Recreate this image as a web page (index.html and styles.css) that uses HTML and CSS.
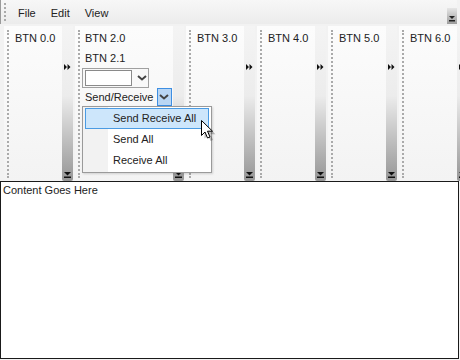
FILE: index.html
```html
<!DOCTYPE html>
<html lang="en">
<head>
  <meta charset="UTF-8">
  <title>Toolbars</title>
  <link rel="stylesheet" href="styles.css">
</head>
<body>

<div class="menubar">
  <span class="handle"></span>
  <span class="menu-item">File</span>
  <span class="menu-item">Edit</span>
  <span class="menu-item">View</span>
  <span class="menu-chev">
    <svg width="10" height="8" viewBox="0 0 10 8"><path d="M2 1h6L5 4z" fill="#222"/><rect x="2" y="5" width="6" height="1.5" fill="#222"/></svg>
  </span>
</div>

<div class="toolbars">
  <div class="toolbar">
    <span class="handle"></span>
    <div class="tb-body narrow">
      <div class="btn">BTN 0.0</div>
    </div>
    <div class="strip">
      <svg class="more" width="7" height="6" viewBox="0 0 7 6"><path d="M0 0l3 3-3 3zM3.5 0l3 3-3 3z" fill="#111"/></svg>
      <svg width="9" height="8" viewBox="0 0 9 8"><path d="M1 1h7L4.5 4.5z" fill="#111"/><rect x="1" y="5.5" width="7" height="1.5" fill="#111"/></svg>
    </div>
  </div>

  <div class="toolbar">
    <span class="handle"></span>
    <div class="tb-body wide">
      <div class="btn">BTN 2.0</div>
      <div class="btn">BTN 2.1</div>
      <div class="combo">
        <span class="combo-field"></span>
        <svg width="10" height="6" viewBox="0 0 10 6"><path d="M1 1l4 3.5L9 1" fill="none" stroke="#444" stroke-width="2"/></svg>
      </div>
      <div class="split">
        <span>Send/Receive</span>
        <span class="split-btn">
          <svg width="10" height="6" viewBox="0 0 10 6"><path d="M1 1l4 3.5L9 1" fill="none" stroke="#444" stroke-width="2"/></svg>
        </span>
      </div>
    </div>
    <div class="strip">
      <span class="more-gap"></span>
      <svg width="9" height="8" viewBox="0 0 9 8"><path d="M1 1h7L4.5 4.5z" fill="#111"/><rect x="1" y="5.5" width="7" height="1.5" fill="#111"/></svg>
    </div>
  </div>

  <div class="toolbar">
    <span class="handle"></span>
    <div class="tb-body narrow">
      <div class="btn">BTN 3.0</div>
    </div>
    <div class="strip">
      <svg class="more" width="7" height="6" viewBox="0 0 7 6"><path d="M0 0l3 3-3 3zM3.5 0l3 3-3 3z" fill="#111"/></svg>
      <svg width="9" height="8" viewBox="0 0 9 8"><path d="M1 1h7L4.5 4.5z" fill="#111"/><rect x="1" y="5.5" width="7" height="1.5" fill="#111"/></svg>
    </div>
  </div>

  <div class="toolbar">
    <span class="handle"></span>
    <div class="tb-body narrow">
      <div class="btn">BTN 4.0</div>
    </div>
    <div class="strip">
      <svg class="more" width="7" height="6" viewBox="0 0 7 6"><path d="M0 0l3 3-3 3zM3.5 0l3 3-3 3z" fill="#111"/></svg>
      <svg width="9" height="8" viewBox="0 0 9 8"><path d="M1 1h7L4.5 4.5z" fill="#111"/><rect x="1" y="5.5" width="7" height="1.5" fill="#111"/></svg>
    </div>
  </div>

  <div class="toolbar">
    <span class="handle"></span>
    <div class="tb-body narrow">
      <div class="btn">BTN 5.0</div>
    </div>
    <div class="strip">
      <svg class="more" width="7" height="6" viewBox="0 0 7 6"><path d="M0 0l3 3-3 3zM3.5 0l3 3-3 3z" fill="#111"/></svg>
      <svg width="9" height="8" viewBox="0 0 9 8"><path d="M1 1h7L4.5 4.5z" fill="#111"/><rect x="1" y="5.5" width="7" height="1.5" fill="#111"/></svg>
    </div>
  </div>

  <div class="toolbar">
    <span class="handle"></span>
    <div class="tb-body narrow">
      <div class="btn">BTN 6.0</div>
    </div>
    <div class="strip">
      <svg class="more" width="7" height="6" viewBox="0 0 7 6"><path d="M0 0l3 3-3 3zM3.5 0l3 3-3 3z" fill="#111"/></svg>
      <svg width="9" height="8" viewBox="0 0 9 8"><path d="M1 1h7L4.5 4.5z" fill="#111"/><rect x="1" y="5.5" width="7" height="1.5" fill="#111"/></svg>
    </div>
  </div>
</div>

<div class="content">Content Goes Here</div>

<div class="popup">
  <div class="popup-item active">Send Receive All</div>
  <div class="popup-item">Send All</div>
  <div class="popup-item">Receive All</div>
</div>

<svg class="cursor" width="16" height="22" viewBox="0 0 16 22">
  <path d="M2.5 2.5v15l3.5-3.5 2.5 6 2.5-1-2.5-5.8h5z" fill="#000" opacity="0.25" transform="translate(2 2)"/>
  <path d="M1.5 1.5v15l3.5-3.5 2.5 6 2.5-1-2.5-5.8h5z" fill="#fff" stroke="#000" stroke-width="1" stroke-linejoin="round"/>
</svg>

</body>
</html>
```

FILE: styles.css
```css
body {
  margin: 0;
  font-family: "Liberation Sans", Arial, sans-serif;
  font-size: 11px;
  color: #222;
  background: #f2f2f2;
  position: relative;
  width: 460px;
  height: 360px;
  overflow: hidden;
}

.handle {
  width: 0;
  border-left: 2px dotted #aaa;
}

/* menu bar */
.menubar {
  display: flex;
  align-items: center;
  height: 24px;
  border-left: 1px solid #9a9a9a;
  margin-right: 3px;
  background: linear-gradient(#f7f7f7, #ececec);
}
.menubar .handle {
  align-self: stretch;
  margin: 3px 0 3px 3px;
}
.menu-item {
  margin-left: 12px;
  margin-right: 3px;
  padding-top: 1px;
}
.menu-chev {
  margin-left: auto;
  width: 10px;
  height: 16px;
  margin-top: 7px;
  display: flex;
  align-items: flex-end;
  justify-content: center;
  padding-bottom: 1px;
  box-sizing: border-box;
  background: linear-gradient(#e6e6e6, #9c9c9c);
}

/* toolbars */
.toolbars {
  display: flex;
  gap: 2px;
  height: 155px;
  margin-top: 2px;
  padding-left: 4px;
}
.toolbar {
  display: flex;
  flex-shrink: 0;
  background: linear-gradient(#fcfcfc, #f3f3f3);
}
.toolbar .handle {
  margin: 4px 6px 3px 3px;
}
.tb-body {
  padding-top: 5px;
}
.tb-body.narrow {
  width: 47px;
}
.tb-body.wide {
  width: 88px;
  margin-left: -1px;
}
.btn {
  height: 20px;
  line-height: 14px;
}
.combo {
  display: flex;
  align-items: center;
  gap: 5px;
  width: 67px;
  height: 20px;
  border: 1px solid #a0a0a0;
  margin-left: -3px;
  margin-top: -3px;
  padding-left: 2px;
  box-sizing: border-box;
  background: #f8f8f8;
}
.combo-field {
  width: 45px;
  height: 14px;
  background: #fff;
  border: 1px solid #8a8a8a;
}
.split {
  display: flex;
  align-items: center;
  height: 18px;
  margin-top: 0;
}
.split-btn {
  width: 13px;
  height: 16px;
  margin-left: 3px;
  display: flex;
  align-items: center;
  justify-content: center;
  background: #b9d6f4;
  border: 1px solid #3d8ee2;
}

.strip {
  width: 11px;
  display: flex;
  flex-direction: column;
  align-items: center;
  padding-bottom: 2px;
  box-sizing: border-box;
  background: linear-gradient(#f4f4f4 0%, #ececec 45%, #969696 100%);
  border-radius: 0 0 2px 2px;
}
.strip .more {
  margin-top: 38px;
}
.strip .more-gap {
  height: 44px;
}
.strip svg:last-child {
  margin-top: auto;
}

/* content */
.content {
  margin: 0 1px 0 0;
  border: 1px solid #1a1a1a;
  padding: 2px;
  box-sizing: border-box;
  height: 178px;
  line-height: 12px;
  background: #fff;
}

/* dropdown popup */
.popup {
  position: absolute;
  left: 82px;
  top: 106px;
  width: 130px;
  height: 67px;
  box-sizing: border-box;
  border: 1px solid #9a9a9a;
  background: linear-gradient(to right, #f2f2f2 25px, #fff 25px);
  padding: 1px 2px;
  box-shadow: 1px 1px 2px rgba(0, 0, 0, 0.15);
}
.popup-item {
  height: 21px;
  line-height: 19px;
  padding-left: 27px;
  border: 1px solid transparent;
  box-sizing: border-box;
}
.popup-item.active {
  background: #cde6fb;
  border-color: #4a9be3;
}

.cursor {
  position: absolute;
  left: 200px;
  top: 119px;
}
```
